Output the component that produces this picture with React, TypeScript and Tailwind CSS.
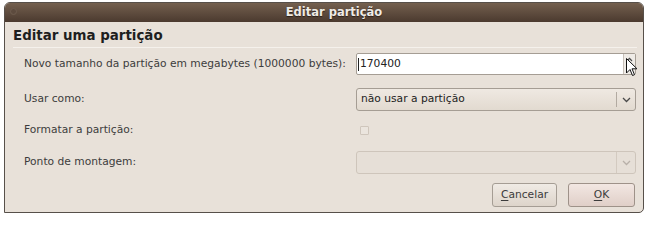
import React from "react";

function Chevron({ light }: { light?: boolean }) {
  return (
    <svg width="9" height="6" viewBox="0 0 9 6" className="block">
      <path d="M1 1 L4.5 4.5 L8 1" fill="none" stroke={light ? "#b8b0a8" : "#4a4a4a"} strokeWidth="1.3" />
    </svg>
  );
}

function Cursor() {
  return (
    <svg width="12" height="19" viewBox="0 0 12 19" className="absolute left-[626px] top-[58px]">
      <path d="M0.5 0.5 L0.5 15 L4 11.5 L6.5 17.5 L8.5 16.7 L6 10.8 L11 10.8 Z" fill="#ffffff" stroke="#111111" strokeWidth="1" strokeLinejoin="round" />
    </svg>
  );
}

export default function App() {
  return (
    <div className="relative w-[650px] h-[220px] bg-white pl-[4px] pt-[2px] font-['DejaVu_Sans',sans-serif] text-[10.7px] text-[#3c3c3c]">
      <div className="w-[640px] h-[211px] flex flex-col rounded-t-[6px] rounded-br-[5px] border border-[#57504a] overflow-hidden bg-[#e8e1d9]">
        {/* title bar */}
        <div className="relative h-[19px] shrink-0 bg-gradient-to-b from-[#74604f] to-[#4b3a2f] flex items-center justify-center pl-[20px]">
          <div className="absolute left-[5px] top-[5px] w-[7px] h-[7px] rounded-full bg-[#5d4b3e] border border-[#6e5c4e]" />
          <span className="text-[11.5px] font-bold text-[#efebe6] leading-none [text-shadow:0_1px_1px_#2a1f18]">Editar partição</span>
        </div>

        <div className="flex flex-col pl-[8px] pr-[6px]">
          <div className="pt-[5px] pb-[2px] text-[13.4px] font-bold text-[#1e1e1e] leading-[18px]">Editar uma partição</div>
          <div className="h-px bg-[#c9beb3] border-b border-[#f5f1ec]" />

          <div className="grid grid-cols-[332px_280px] pl-[11px] mt-[5px] items-center">
            <div className="h-[22px] flex items-center whitespace-nowrap">Novo tamanho da partição em megabytes (1000000 bytes):</div>
            <div className="h-[22px] flex items-stretch bg-white border border-[#a59d94] rounded-[2px]">
              <div className="flex-1 flex items-center pl-[1px] text-[10.7px] text-[#222222]">
                <span className="w-px h-[13px] bg-[#222222] mr-[1px]" />
                170400
              </div>
              <div className="w-[12px] flex flex-col items-center pt-[3px] bg-[#efebe6] border-l border-[#c8c0b8]">
                <svg width="7" height="5" viewBox="0 0 7 5"><path d="M1 4 L3.5 1.3 L6 4" fill="none" stroke="#4a4a4a" strokeWidth="1.2" /></svg>
              </div>
            </div>

            <div className="h-[23px] mt-[13px] flex items-center">Usar como:</div>
            <div className="h-[23px] mt-[13px] flex items-center border border-[#a59d94] rounded-[3px] bg-gradient-to-b from-[#efe9e2] to-[#e2dad0]">
              <span className="flex-1 pl-[4px] text-[10.7px] text-[#222222]">não usar a partição</span>
              <span className="w-px h-[15px] bg-[#b2aaa1]" />
              <span className="w-[18px] flex justify-center"><Chevron /></span>
            </div>

            <div className="h-[20px] mt-[9px] flex items-center">Formatar a partição:</div>
            <div className="h-[20px] mt-[9px] flex items-center pl-[4px]">
              <span className="w-[9px] h-[9px] border border-[#cfc6bc] rounded-[1px] bg-[#ebe5de]" />
            </div>

            <div className="h-[23px] mt-[11px] flex items-center">Ponto de montagem:</div>
            <div className="h-[23px] mt-[11px] flex items-center border border-[#cec5bb] rounded-[3px] bg-[#e6dfd7]">
              <span className="flex-1" />
              <span className="w-px h-[21px] bg-[#d3cac0]" />
              <span className="w-[18px] flex justify-center"><Chevron light /></span>
            </div>
          </div>

          <div className="flex justify-end gap-[11px] mt-[9px] pr-[2px]">
            <button className="w-[65px] h-[24px] border border-[#a59d94] rounded-[3px] bg-gradient-to-b from-[#f0ebe5] to-[#ddd4ca] text-[10.7px] text-[#3c3c3c]">
              <span className="underline underline-offset-2">C</span>ancelar
            </button>
            <button className="w-[67px] h-[24px] border border-[#9e9289] rounded-[3px] bg-gradient-to-b from-[#f2e7e2] to-[#e0cfc8] text-[10.7px] text-[#3c3c3c]">
              <span className="underline underline-offset-2">O</span>K
            </button>
          </div>
        </div>
      </div>
      <Cursor />
    </div>
  );
}
